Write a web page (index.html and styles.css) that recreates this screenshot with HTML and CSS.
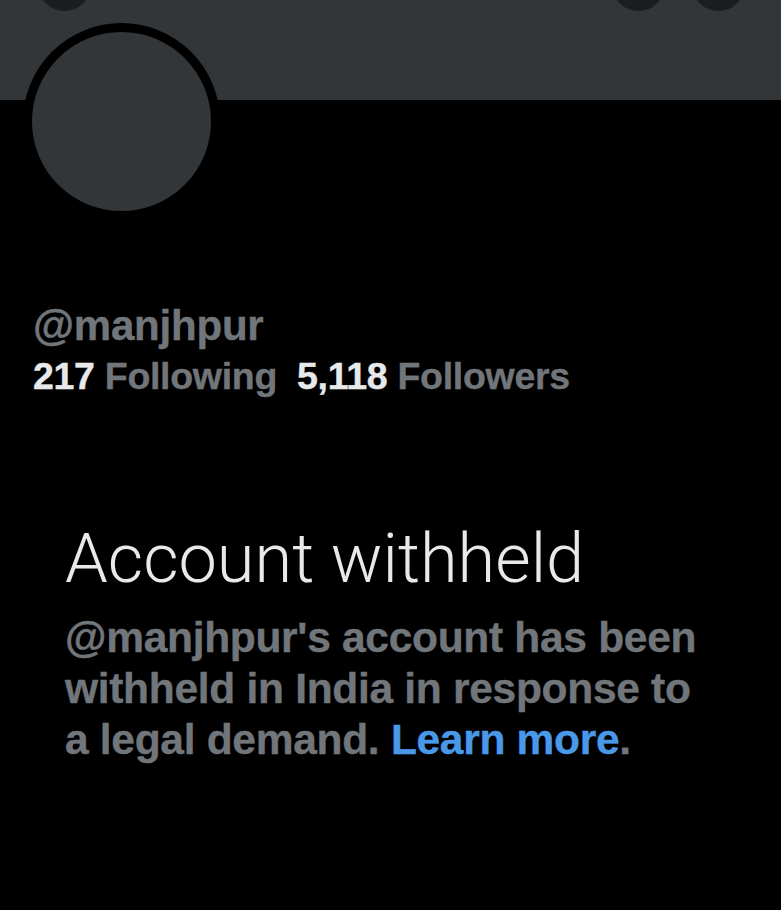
FILE: index.html
```html
<!DOCTYPE html>
<html>
<head>
<meta charset="utf-8">
<link rel="stylesheet" href="styles.css">
</head>
<body>
<div class="page">
  <header class="banner">
    <span class="nav-btn nav-back"></span>
    <span class="nav-btn nav-search"></span>
    <span class="nav-btn nav-more"></span>
    <div class="avatar"></div>
  </header>
  <section class="profile">
    <div class="handle">@manjhpur</div>
    <div class="stats">
      <span class="stat"><b>217</b> Following</span>
      <span class="stat"><b>5,118</b> Followers</span>
    </div>
  </section>
  <section class="withheld">
    <h1 class="title">Account withheld</h1>
    <p class="message">@manjhpur's account has been withheld in India in response to a legal demand. <a class="link" href="#">Learn more</a>.</p>
  </section>
</div>
</body>
</html>
```
FILE: styles.css
```css
html, body {
  margin: 0;
  padding: 0;
  background: #000;
}
.page {
  width: 781px;
  height: 910px;
  background: #000;
  font-family: "Liberation Sans", Arial, sans-serif;
  overflow: hidden;
}
.banner {
  position: relative;
  height: 100px;
  background: #333639;
}
.nav-btn {
  position: absolute;
  top: -42px;
  width: 53px;
  height: 53px;
  border-radius: 50%;
  background: #1c1d1f;
}
.nav-back { left: 38px; }
.nav-search { left: 612px; }
.nav-more { left: 692px; }
.avatar {
  position: absolute;
  left: 23px;
  top: 23px;
  width: 179px;
  height: 179px;
  border: 9px solid #000;
  border-radius: 50%;
  background: #333639;
}
.profile {
  padding: 202px 0 0 33px;
}
.handle {
  font-size: 42px;
  line-height: 48px;
  font-weight: 700;
  color: #71767b;
  letter-spacing: -0.2px;
  -webkit-text-stroke: 0.4px #71767b;
}
.stats {
  margin-top: 2px;
  display: flex;
  gap: 20px;
  font-size: 37.5px;
  line-height: 48px;
  font-weight: 700;
  color: #71767b;
  letter-spacing: -0.3px;
  -webkit-text-stroke: 0.4px currentColor;
}
.stat b {
  color: #e7e9ea;
}
.withheld {
  padding: 119px 0 0 65px;
}
.title {
  margin: 0;
  font-family: Roboto, "Liberation Sans", sans-serif;
  font-weight: 300;
  font-size: 68.5px;
  line-height: 80px;
  color: #e7e9ea;
  letter-spacing: 0;
}
.message {
  margin: 13px 0 0;
  max-width: 650px;
  font-size: 42.5px;
  line-height: 51px;
  font-weight: 700;
  color: #71767b;
  letter-spacing: -0.3px;
  -webkit-text-stroke: 0.4px currentColor;
}
.link {
  color: #4a99e9;
  text-decoration: none;
}
```
